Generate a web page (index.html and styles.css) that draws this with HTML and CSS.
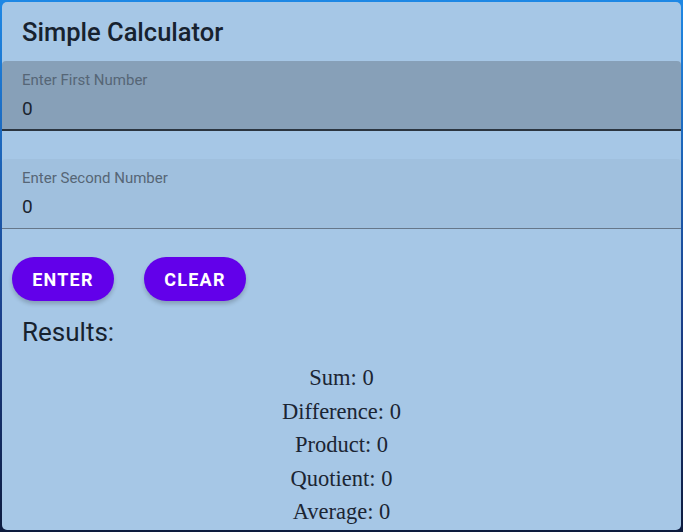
FILE: index.html
```html
<!DOCTYPE html>
<html>
<head>
<meta charset="utf-8">
<link rel="stylesheet" href="styles.css">
</head>
<body>
<div class="card">
  <h1 class="title">Simple Calculator</h1>
  <div class="field field-focused">
    <label class="field-label">Enter First Number</label>
    <div class="field-value">0</div>
  </div>
  <div class="field field-second">
    <label class="field-label">Enter Second Number</label>
    <div class="field-value">0</div>
  </div>
  <div class="actions">
    <button class="btn">ENTER</button>
    <button class="btn">CLEAR</button>
  </div>
  <h2 class="results-title">Results:</h2>
  <div class="results">
    <p>Sum: 0</p>
    <p>Difference: 0</p>
    <p>Product: 0</p>
    <p>Quotient: 0</p>
    <p>Average: 0</p>
  </div>
</div>
</body>
</html>
```
FILE: styles.css
```css
html, body {
  margin: 0;
  height: 100%;
}
body {
  background: linear-gradient(180deg, #1e88e5 0%, #1a3f8a 60%, #0d1b3e 100%);
  padding: 2px;
  box-sizing: border-box;
  font-family: Roboto, "Liberation Sans", sans-serif;
}
.card {
  background: #a6c7e6;
  border-radius: 5px;
  height: 528px;
  overflow: hidden;
  display: flex;
  flex-direction: column;
}
.title {
  margin: 0;
  padding: 15px 20px 0 20px;
  height: 44px;
  font-size: 25.5px;
  font-weight: 500;
  color: #17222f;
  line-height: 30px;
}
.field {
  padding: 11px 20px 0 20px;
  box-sizing: border-box;
  border-radius: 4px 4px 0 0;
  height: 70px;
}
.field-focused {
  background: #87a0b8;
  border-bottom: 2px solid #2b3540;
}
.field-second {
  background: #a0c0de;
  margin-top: 28px;
  border-bottom: 1px solid #66778a;
}
.field-label {
  display: block;
  font-size: 15px;
  color: #566676;
  line-height: 17px;
}
.field-value {
  margin-top: 9px;
  font-size: 19px;
  color: #1b2530;
  line-height: 22px;
}
.actions {
  display: flex;
  gap: 30px;
  padding: 28px 0 0 10px;
}
.btn {
  height: 44px;
  width: 102px;
  border: none;
  border-radius: 22px;
  background: #6200ea;
  color: #fff;
  font-family: Roboto, "Liberation Sans", sans-serif;
  font-weight: 700;
  font-size: 18px;
  letter-spacing: 1.2px;
  box-shadow: 0 3px 4px rgba(0,0,0,0.2);
  padding: 0;
}
.results-title {
  margin: 0;
  padding: 16px 20px 0 20px;
  font-size: 26px;
  font-weight: 400;
  color: #17222f;
  line-height: 30px;
}
.results {
  margin-top: 14px;
  text-align: center;
  font-family: "Liberation Serif", serif;
  font-size: 22.5px;
  color: #1b2533;
}
.results p {
  margin: 0;
  line-height: 33.5px;
}
```
